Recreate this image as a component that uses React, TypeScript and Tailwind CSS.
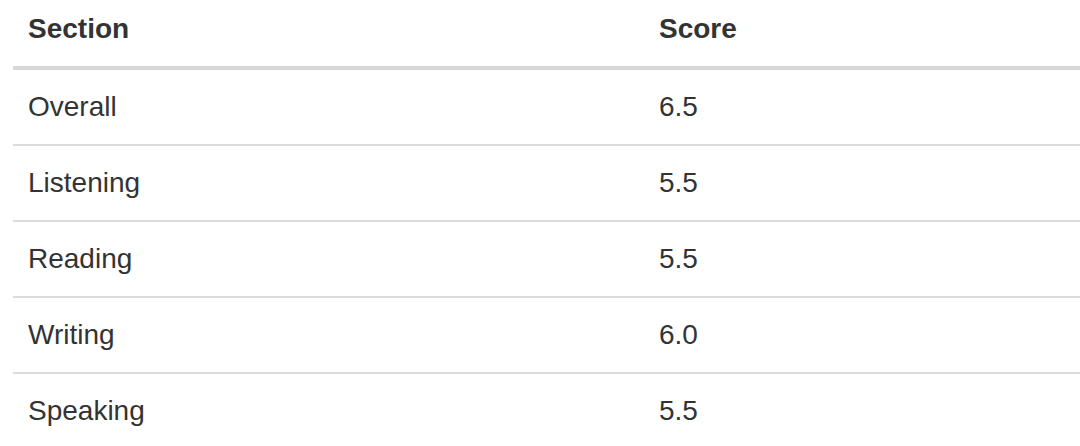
import React from "react";

const rows = [
  { section: "Overall", score: "6.5" },
  { section: "Listening", score: "5.5" },
  { section: "Reading", score: "5.5" },
  { section: "Writing", score: "6.0" },
  { section: "Speaking", score: "5.5" },
];

export default function App() {
  return (
    <div className="w-[1080px] h-[446px] overflow-hidden bg-white pl-[13px] font-['Liberation_Sans',Arial,sans-serif] text-[#333333]">
      <div className="grid grid-cols-[631px_1fr] h-[70px] border-b-4 border-[#d7d7d7] text-[28px] font-bold">
        <div className="flex items-center pl-[15px] pb-[9px]">Section</div>
        <div className="flex items-center pl-[15px] pb-[9px]">Score</div>
      </div>
      {rows.map((row) => (
        <div
          key={row.section}
          className="grid grid-cols-[631px_1fr] h-[76px] border-b-2 border-[#dcdcdc] text-[28px]"
        >
          <div className="flex items-center pl-[15px]">{row.section}</div>
          <div className="flex items-center pl-[15px]">{row.score}</div>
        </div>
      ))}
    </div>
  );
}
